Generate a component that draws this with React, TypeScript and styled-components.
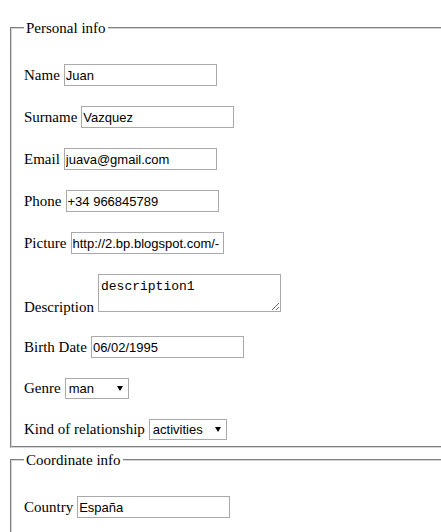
import styled, { createGlobalStyle } from "styled-components";

const GlobalStyle = createGlobalStyle`
    html, body {
        margin: 0;
        background: #ffffff;
        overflow: hidden;
    }
    body {
        font-family: "Liberation Serif", "Times New Roman", serif;
        font-size: 15px;
        color: #000000;
    }
`;

const Wrapper = styled.div`
    padding: 19px 0 0 10px;
`;

const Fieldset = styled.fieldset<{ $tail?: number }>`
    width: 460px;
    margin: 0 0 3px 0;
    padding: 0 12px ${(props) => props.$tail ?? 6}px 12px;
    border: 2px groove #d4d4d4;
    box-sizing: border-box;
    min-width: 0;
`;

const Legend = styled.legend`
    padding: 0 2px;
    line-height: 18px;
    font-size: 15px;
`;

const Rows = styled.div`
    display: flex;
    flex-direction: column;
    gap: 20px;
    padding-top: 27px;
`;

const Row = styled.div<{ $bottom?: boolean }>`
    display: flex;
    align-items: ${(props) => (props.$bottom ? "flex-end" : "baseline")};
    gap: 4px;
`;

const Label = styled.label`
    line-height: 18px;
    white-space: nowrap;
`;

const TextInput = styled.input`
    width: 153px;
    height: 22px;
    box-sizing: border-box;
    margin: 0;
    padding: 0 1px;
    border: 1px solid #a9a9a9;
    border-radius: 0;
    font-family: "Liberation Sans", Arial, sans-serif;
    font-size: 13px;
    color: #000000;
    outline: none;
`;

const TextArea = styled.textarea`
    width: 183px;
    height: 38px;
    box-sizing: border-box;
    margin: 0 0 4px 0;
    padding: 4px 2px;
    border: 1px solid #a9a9a9;
    border-radius: 0;
    font-family: "Liberation Mono", "Courier New", monospace;
    font-size: 13px;
    line-height: 15px;
    color: #000000;
    outline: none;
`;

const SelectBox = styled.span<{ $width: number }>`
    position: relative;
    display: inline-block;
    width: ${(props) => props.$width}px;

    &::after {
        content: "";
        position: absolute;
        right: 6px;
        top: 8px;
        border-left: 3.5px solid transparent;
        border-right: 3.5px solid transparent;
        border-top: 5px solid #000000;
        pointer-events: none;
    }
`;

const Select = styled.select`
    appearance: none;
    width: 100%;
    height: 21px;
    box-sizing: border-box;
    margin: 0;
    padding: 0 0 0 3px;
    border: 1px solid #a9a9a9;
    border-radius: 0;
    background: #ffffff;
    font-family: "Liberation Sans", Arial, sans-serif;
    font-size: 13px;
    color: #000000;
    outline: none;
`;

function App() {
    return (
        <Wrapper>
            <GlobalStyle />
            <form>
                <Fieldset>
                    <Legend>Personal info</Legend>
                    <Rows>
                        <Row>
                            <Label>Name</Label>
                            <TextInput defaultValue="Juan" />
                        </Row>
                        <Row>
                            <Label>Surname</Label>
                            <TextInput defaultValue="Vazquez" />
                        </Row>
                        <Row>
                            <Label>Email</Label>
                            <TextInput defaultValue="juava@gmail.com" />
                        </Row>
                        <Row>
                            <Label>Phone</Label>
                            <TextInput defaultValue="+34 966845789" />
                        </Row>
                        <Row>
                            <Label>Picture</Label>
                            <TextInput defaultValue="http://2.bp.blogspot.com/-" />
                        </Row>
                        <Row $bottom>
                            <Label>Description</Label>
                            <TextArea defaultValue="description1" />
                        </Row>
                        <Row>
                            <Label>Birth Date</Label>
                            <TextInput defaultValue="06/02/1995" />
                        </Row>
                        <Row>
                            <Label>Genre</Label>
                            <SelectBox $width={64}>
                                <Select defaultValue="man">
                                    <option value="man">man</option>
                                    <option value="woman">woman</option>
                                </Select>
                            </SelectBox>
                        </Row>
                        <Row>
                            <Label>Kind of relationship</Label>
                            <SelectBox $width={78}>
                                <Select defaultValue="activities">
                                    <option value="activities">activities</option>
                                    <option value="friendship">friendship</option>
                                </Select>
                            </SelectBox>
                        </Row>
                    </Rows>
                </Fieldset>
                <Fieldset $tail={40}>
                    <Legend>Coordinate info</Legend>
                    <Rows>
                        <Row>
                            <Label>Country</Label>
                            <TextInput defaultValue="España" />
                        </Row>
                    </Rows>
                </Fieldset>
            </form>
        </Wrapper>
    );
}

export default App;
